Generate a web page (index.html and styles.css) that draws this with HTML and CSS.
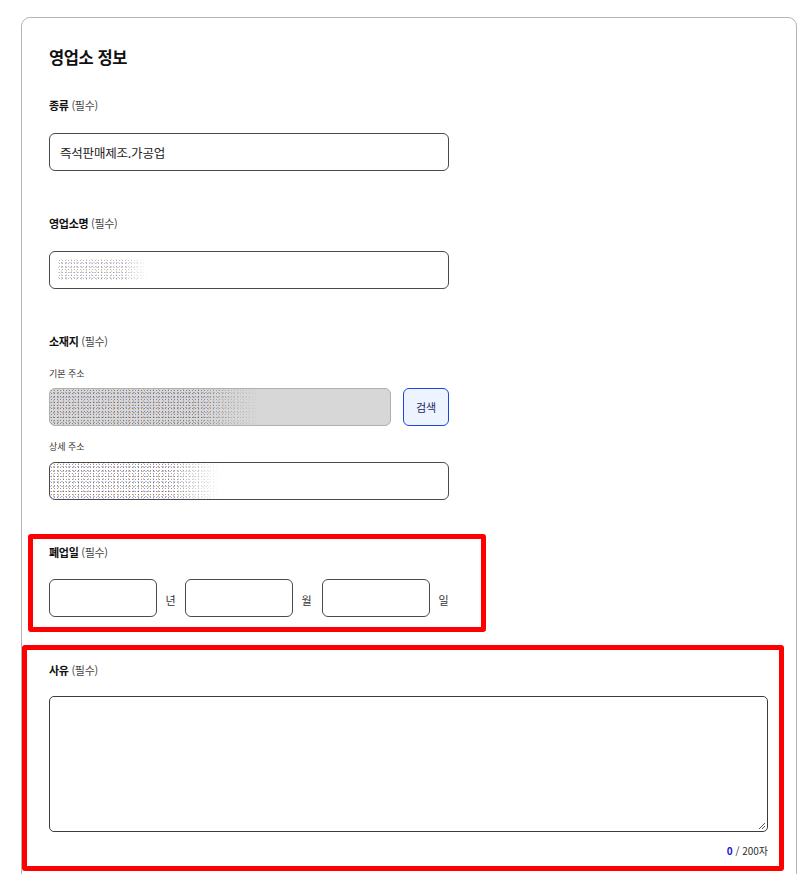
FILE: index.html
```html
<!DOCTYPE html>
<html lang="ko">
<head>
<meta charset="utf-8">
<title>영업소 정보</title>
<link rel="stylesheet" href="styles.css">
</head>
<body>
<div class="card">
  <h2 class="title">영업소 정보</h2>

  <div class="field">
    <div class="label">종류 <span class="req">(필수)</span></div>
    <div class="input">즉석판매제조.가공업</div>
  </div>

  <div class="field">
    <div class="label">영업소명 <span class="req">(필수)</span></div>
    <div class="input"><span class="redact redact-name"></span></div>
  </div>

  <div class="field">
    <div class="label">소재지 <span class="req">(필수)</span></div>
    <div class="sublabel">기본 주소</div>
    <div class="row">
      <div class="input input-disabled"><span class="redact redact-addr"></span></div>
      <button class="btn-search" type="button">검색</button>
    </div>
    <div class="sublabel sublabel-2">상세 주소</div>
    <div class="input input-detail"><span class="redact redact-detail"></span></div>
  </div>

  <section class="mark mark-date">
    <div class="label">폐업일 <span class="req">(필수)</span></div>
    <div class="date-row">
      <div class="input date-input"></div><span class="unit">년</span>
      <div class="input date-input"></div><span class="unit">월</span>
      <div class="input date-input"></div><span class="unit">일</span>
    </div>
  </section>

  <section class="mark mark-reason">
    <div class="label">사유 <span class="req">(필수)</span></div>
    <div class="textarea">
      <svg class="grip" width="9" height="9" viewBox="0 0 9 9"><path d="M8 2 L2 8 M8 5 L5 8" stroke="#555" stroke-width="1" fill="none"/></svg>
    </div>
    <div class="counter"><b>0</b> / 200자</div>
  </section>
</div>
</body>
</html>
```

FILE: styles.css
```css
* { box-sizing: border-box; }
body {
  margin: 0;
  background: #fff;
  font-family: "Noto Sans CJK KR", "Noto Sans", sans-serif;
  color: #111;
}
.card {
  margin: 17px 0 0 21px;
  width: 776px;
  min-height: 900px;
  border: 1px solid #b4b4b4;
  border-radius: 9px;
  padding: 27px 0 0 27px;
}
.title {
  margin: 0;
  font-size: 16.5px;
  line-height: 24px;
  font-weight: 700;
  letter-spacing: -0.4px;
}
.field { margin-top: 28px; }
.field + .field { margin-top: 44px; }
.label {
  font-size: 11px;
  line-height: 17px;
  font-weight: 700;
  letter-spacing: -0.3px;
}
.req {
  font-size: 11px;
  font-weight: 400;
  color: #444;
}
.input {
  margin-top: 19px;
  width: 400px;
  height: 38px;
  border: 1px solid #4a4a4a;
  border-radius: 6px;
  padding: 0 10px;
  display: flex;
  align-items: center;
  font-size: 12.5px;
  color: #222;
  letter-spacing: -0.2px;
  overflow: hidden;
}
.sublabel {
  margin-top: 18px;
  font-size: 9px;
  line-height: 12px;
  color: #333;
}
.sublabel-2 { margin-top: 15px; }
.row {
  margin-top: 8px;
  display: flex;
  gap: 12px;
  width: 400px;
}
.row .input { margin-top: 0; }
.input-disabled {
  width: 342px;
  background: #d7d7d7;
  border-color: #b0b0b0;
  padding: 0;
}
.btn-search {
  width: 46px;
  height: 38px;
  border: 1.5px solid #1747e0;
  border-radius: 6px;
  background: #eef4ff;
  color: #1b2a66;
  font-family: inherit;
  font-size: 11px;
  padding: 0;
}
.input-detail { margin-top: 9px; padding: 0; }
.redact {
  display: block;
  height: 100%;
  background-image:
    radial-gradient(circle, rgba(60,60,90,0.55) 0.7px, transparent 1px),
    radial-gradient(circle, rgba(200,120,40,0.45) 0.6px, transparent 1px),
    radial-gradient(circle, rgba(70,120,200,0.45) 0.6px, transparent 1px);
  background-size: 3px 3px, 5px 4px, 4px 5px;
  background-position: 0 0, 1px 2px, 2px 1px;
  -webkit-mask-image: linear-gradient(to right, #000 70%, transparent);
  mask-image: linear-gradient(to right, #000 70%, transparent);
}
.redact-name { width: 90px; height: 22px; margin-left: -2px; opacity: 0.7; }
.redact-addr { width: 210px; height: 100%; }
.redact-detail { width: 170px; }

.mark {
  border: 5px solid #ff0000;
  border-radius: 3px;
}
.mark-date {
  margin: 34px 0 0 -21px;
  width: 458px;
  padding: 5px 0 10px 16px;
}
.date-row {
  margin-top: 18px;
  display: flex;
  align-items: center;
}
.date-input {
  margin-top: 0;
  width: 108px;
}
.unit {
  font-size: 11px;
  color: #333;
  width: 11px;
  margin: 4px 9px 0 8px;
  text-align: center;
}
.unit:nth-of-type(2) { margin-right: 10px; }
.mark-reason {
  margin: 13px 0 0 -27px;
  width: 762px;
  padding: 12px 11px 8px 22px;
}
.textarea {
  margin-top: 17px;
  height: 136px;
  border: 1px solid #3c3c3c;
  border-radius: 5px;
  position: relative;
}
.grip { position: absolute; right: 1px; bottom: 1px; }
.counter {
  margin-top: 12px;
  text-align: right;
  font-size: 10px;
  line-height: 14px;
  color: #333;
}
.counter b { color: #1515d6; }
```
